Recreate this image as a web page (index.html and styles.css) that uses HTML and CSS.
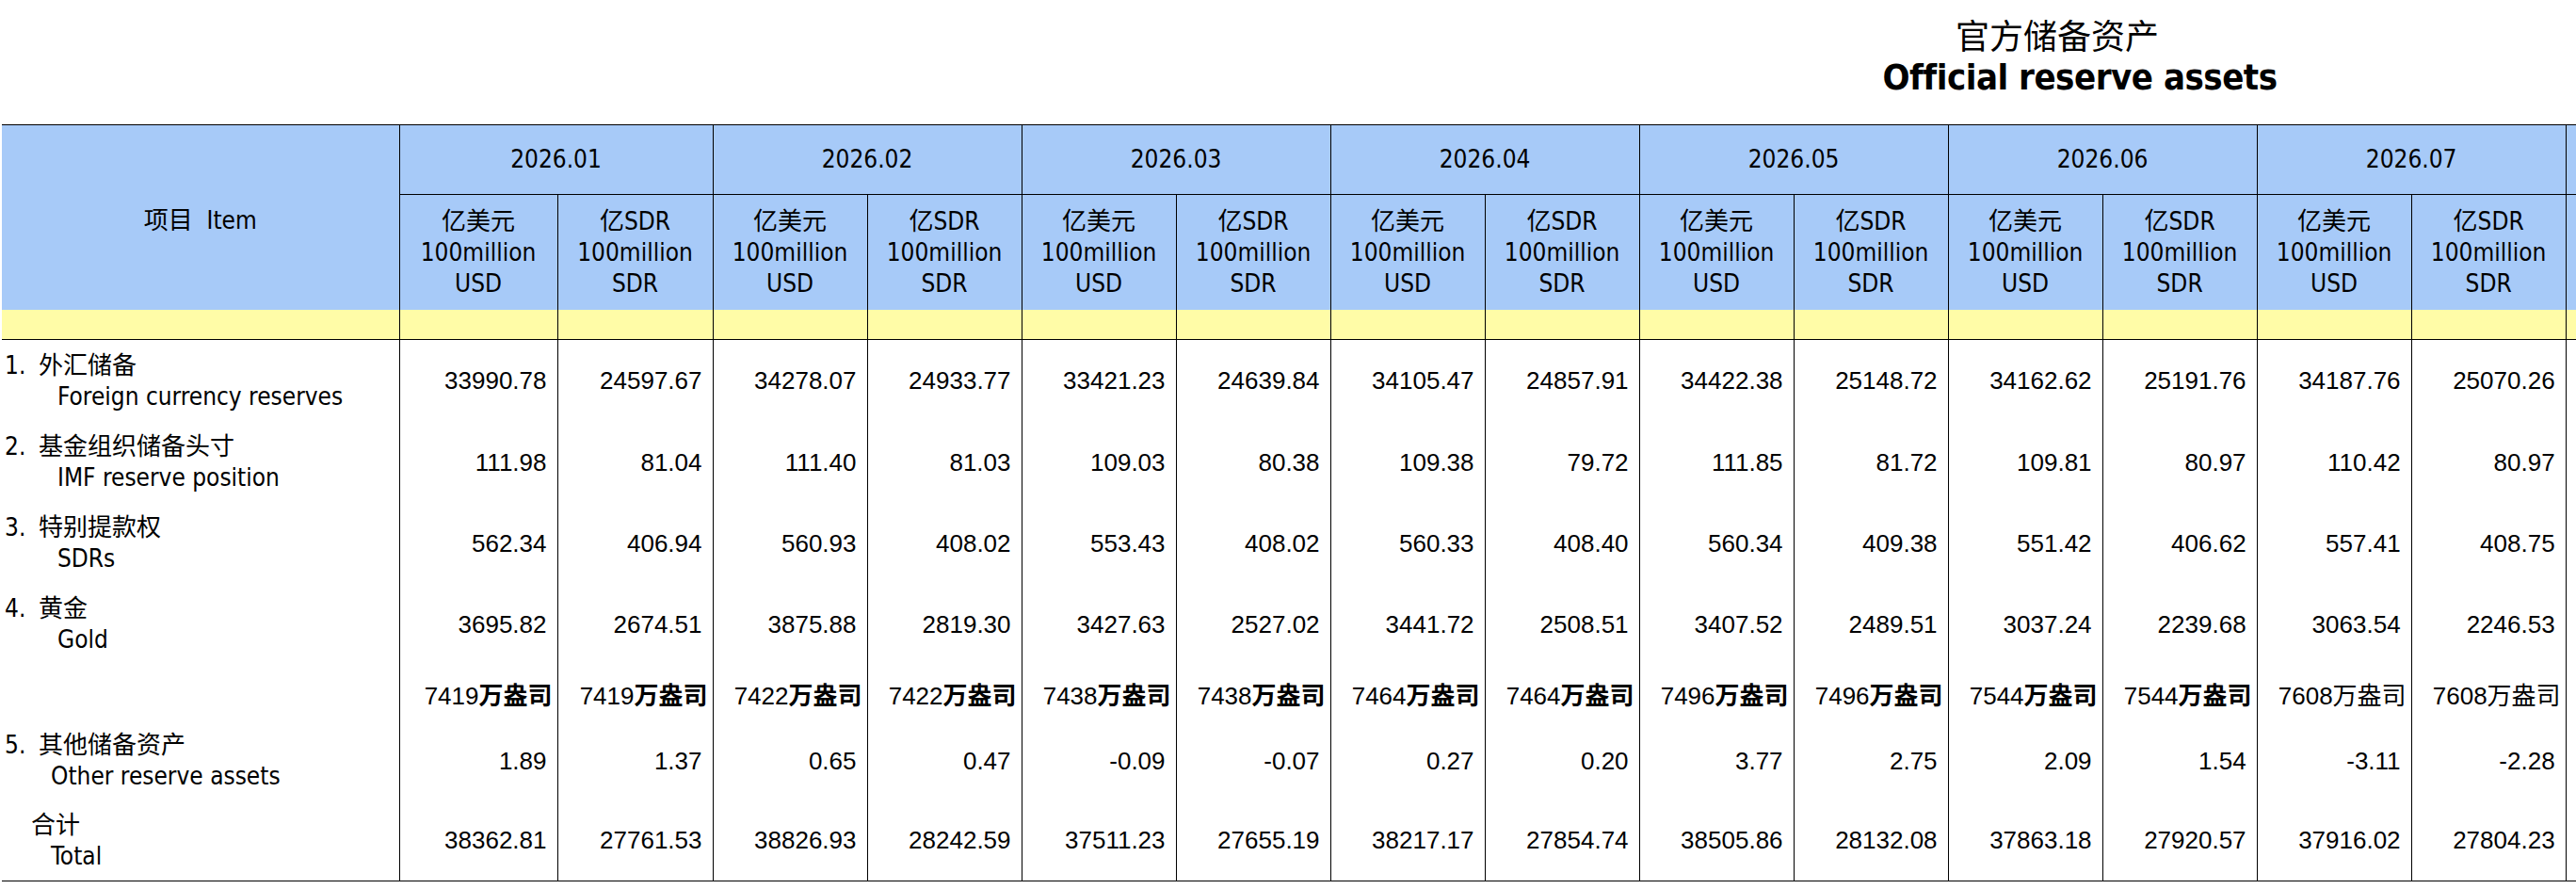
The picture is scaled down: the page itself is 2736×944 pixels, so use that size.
FILE: index.html
```html
<!DOCTYPE html>
<html lang="zh-CN">
<head>
<meta charset="utf-8">
<title>官方储备资产 Official reserve assets</title>
<link rel="stylesheet" href="styles.css">
</head>
<body>
<div class="page">
  <div class="title">
    <div class="title-cn">官方储备资产</div>
    <div class="title-en">Official reserve assets</div>
  </div>
  <table class="grid">
    <colgroup>
      <col class="c-item">
      <col class="c-usd1"><col class="c-sdr1">
      <col class="c-v"><col class="c-v">
      <col class="c-v"><col class="c-v">
      <col class="c-v"><col class="c-v">
      <col class="c-v"><col class="c-v">
      <col class="c-v"><col class="c-v">
      <col class="c-v"><col class="c-v">
      <col class="c-stub">
    </colgroup>
    <thead>
      <tr class="r-year">
        <th class="h-item" rowspan="2">项目&nbsp;&nbsp;Item</th>
        <th class="h-year" colspan="2">2026.01</th>
        <th class="h-year" colspan="2">2026.02</th>
        <th class="h-year" colspan="2">2026.03</th>
        <th class="h-year" colspan="2">2026.04</th>
        <th class="h-year" colspan="2">2026.05</th>
        <th class="h-year" colspan="2">2026.06</th>
        <th class="h-year" colspan="2">2026.07</th>
        <th class="h-year"></th>
      </tr>
      <tr class="r-unit">
        <th class="h-unit">亿美元<br>100million<br>USD</th>
        <th class="h-unit">亿SDR<br>100million<br>SDR</th>
        <th class="h-unit">亿美元<br>100million<br>USD</th>
        <th class="h-unit">亿SDR<br>100million<br>SDR</th>
        <th class="h-unit">亿美元<br>100million<br>USD</th>
        <th class="h-unit">亿SDR<br>100million<br>SDR</th>
        <th class="h-unit">亿美元<br>100million<br>USD</th>
        <th class="h-unit">亿SDR<br>100million<br>SDR</th>
        <th class="h-unit">亿美元<br>100million<br>USD</th>
        <th class="h-unit">亿SDR<br>100million<br>SDR</th>
        <th class="h-unit">亿美元<br>100million<br>USD</th>
        <th class="h-unit">亿SDR<br>100million<br>SDR</th>
        <th class="h-unit">亿美元<br>100million<br>USD</th>
        <th class="h-unit">亿SDR<br>100million<br>SDR</th>
        <th class="h-unit"></th>
      </tr>
      <tr class="r-band">
        <td></td><td></td><td></td><td></td><td></td><td></td><td></td><td></td>
        <td></td><td></td><td></td><td></td><td></td><td></td><td></td><td></td>
      </tr>
    </thead>
    <tbody>
      <tr class="r-d1">
        <td class="lab"><div class="ln"><span class="no">1.</span>外汇储备</div><div class="ln in-a">Foreign currency reserves</div></td>
        <td class="v">33990.78</td><td class="v">24597.67</td>
        <td class="v">34278.07</td><td class="v">24933.77</td>
        <td class="v">33421.23</td><td class="v">24639.84</td>
        <td class="v">34105.47</td><td class="v">24857.91</td>
        <td class="v">34422.38</td><td class="v">25148.72</td>
        <td class="v">34162.62</td><td class="v">25191.76</td>
        <td class="v">34187.76</td><td class="v">25070.26</td>
        <td></td>
      </tr>
      <tr class="r-d2">
        <td class="lab"><div class="ln"><span class="no">2.</span>基金组织储备头寸</div><div class="ln in-a">IMF reserve position</div></td>
        <td class="v">111.98</td><td class="v">81.04</td>
        <td class="v">111.40</td><td class="v">81.03</td>
        <td class="v">109.03</td><td class="v">80.38</td>
        <td class="v">109.38</td><td class="v">79.72</td>
        <td class="v">111.85</td><td class="v">81.72</td>
        <td class="v">109.81</td><td class="v">80.97</td>
        <td class="v">110.42</td><td class="v">80.97</td>
        <td></td>
      </tr>
      <tr class="r-d3">
        <td class="lab"><div class="ln"><span class="no">3.</span>特别提款权</div><div class="ln in-a">SDRs</div></td>
        <td class="v">562.34</td><td class="v">406.94</td>
        <td class="v">560.93</td><td class="v">408.02</td>
        <td class="v">553.43</td><td class="v">408.02</td>
        <td class="v">560.33</td><td class="v">408.40</td>
        <td class="v">560.34</td><td class="v">409.38</td>
        <td class="v">551.42</td><td class="v">406.62</td>
        <td class="v">557.41</td><td class="v">408.75</td>
        <td></td>
      </tr>
      <tr class="r-d4">
        <td class="lab"><div class="ln"><span class="no">4.</span>黄金</div><div class="ln in-a">Gold</div></td>
        <td class="v">3695.82</td><td class="v">2674.51</td>
        <td class="v">3875.88</td><td class="v">2819.30</td>
        <td class="v">3427.63</td><td class="v">2527.02</td>
        <td class="v">3441.72</td><td class="v">2508.51</td>
        <td class="v">3407.52</td><td class="v">2489.51</td>
        <td class="v">3037.24</td><td class="v">2239.68</td>
        <td class="v">3063.54</td><td class="v">2246.53</td>
        <td></td>
      </tr>
      <tr class="r-oz">
        <td class="lab"></td>
        <td class="v oz">7419<span class="u-b">万盎司</span></td><td class="v oz">7419<span class="u-b">万盎司</span></td>
        <td class="v oz">7422<span class="u-b">万盎司</span></td><td class="v oz">7422<span class="u-b">万盎司</span></td>
        <td class="v oz">7438<span class="u-b">万盎司</span></td><td class="v oz">7438<span class="u-b">万盎司</span></td>
        <td class="v oz">7464<span class="u-b">万盎司</span></td><td class="v oz">7464<span class="u-b">万盎司</span></td>
        <td class="v oz">7496<span class="u-b">万盎司</span></td><td class="v oz">7496<span class="u-b">万盎司</span></td>
        <td class="v oz">7544<span class="u-b">万盎司</span></td><td class="v oz">7544<span class="u-b">万盎司</span></td>
        <td class="v oz">7608万盎司</td><td class="v oz">7608万盎司</td>
        <td></td>
      </tr>
      <tr class="r-d5">
        <td class="lab"><div class="ln"><span class="no">5.</span>其他储备资产</div><div class="ln in-b">Other reserve assets</div></td>
        <td class="v">1.89</td><td class="v">1.37</td>
        <td class="v">0.65</td><td class="v">0.47</td>
        <td class="v">-0.09</td><td class="v">-0.07</td>
        <td class="v">0.27</td><td class="v">0.20</td>
        <td class="v">3.77</td><td class="v">2.75</td>
        <td class="v">2.09</td><td class="v">1.54</td>
        <td class="v">-3.11</td><td class="v">-2.28</td>
        <td></td>
      </tr>
      <tr class="r-tot">
        <td class="lab"><div class="ln in-c">合计</div><div class="ln in-b">Total</div></td>
        <td class="v">38362.81</td><td class="v">27761.53</td>
        <td class="v">38826.93</td><td class="v">28242.59</td>
        <td class="v">37511.23</td><td class="v">27655.19</td>
        <td class="v">38217.17</td><td class="v">27854.74</td>
        <td class="v">38505.86</td><td class="v">28132.08</td>
        <td class="v">37863.18</td><td class="v">27920.57</td>
        <td class="v">37916.02</td><td class="v">27804.23</td>
        <td></td>
      </tr>
    </tbody>
  </table>
</div>
</body>
</html>
```

FILE: styles.css
```css
html, body {
  margin: 0;
  padding: 0;
  background: #ffffff;
  overflow: hidden;
}

.page {
  width: 2736px;
  height: 944px;
  overflow: hidden;
  color: #000000;
  font-family: "DejaVu Sans Condensed", "DejaVu Sans", "Noto Sans CJK SC", sans-serif;
}

.title {
  height: 132px;
  width: 800px;
  margin-left: 1809px;
  box-sizing: border-box;
  padding-top: 14px;
  text-align: center;
}

.title-cn {
  font-family: "Noto Sans CJK SC", sans-serif;
  font-size: 36px;
  line-height: 44px;
  padding-right: 48px;
}

.title-en {
  font-weight: bold;
  font-size: 38px;
  line-height: 48px;
  letter-spacing: -0.5px;
}

.grid {
  border-collapse: collapse;
  table-layout: fixed;
  width: 2763px;
  margin-left: 2px;
  font-size: 26px;
}

.c-item { width: 422px; }
.c-usd1 { width: 168px; }
.c-sdr1 { width: 165px; }
.c-v { width: 164px; }
.c-stub { width: 40px; }

.grid th,
.grid td {
  padding: 0;
  border-left: 1px solid #000000;
  border-right: 1px solid #000000;
  vertical-align: middle;
  overflow: hidden;
  white-space: nowrap;
}

.grid th:first-child,
.grid td:first-child {
  border-left: none;
}

.grid th {
  background: #a7caf8;
  font-weight: normal;
  text-align: center;
}

.r-year th {
  border-top: 1px solid #000000;
  border-bottom: 1px solid #000000;
  height: 73px;
  line-height: 33px;
}

.r-year th.h-item {
  border-bottom: none;
  padding-top: 6px;
}

.r-unit th {
  height: 122px;
  line-height: 33px;
}

.h-item {
  line-height: 33px;
}

.r-band td {
  background: #fffca7;
  height: 31px;
  border-bottom: 1px solid #000000;
}

.lab {
  padding-left: 3px !important;
  text-align: left;
  line-height: 33px;
}

.ln {
  white-space: nowrap;
}

.no {
  display: inline-block;
  width: 36px;
}

.in-a { padding-left: 56px; }
.in-b { padding-left: 49px; }
.in-c { padding-left: 28px; }

.v {
  font-family: "Liberation Sans", "Noto Sans CJK SC", sans-serif;
  text-align: right;
  padding-right: 11px !important;
}

.v.oz {
  padding-right: 5px !important;
}

.u-b {
  font-weight: 600;
}

.r-d1 td { height: 87px; }
.r-d2 td { height: 86px; }
.r-d3 td { height: 86px; }
.r-d4 td { height: 86px; }
.r-oz td { height: 60px; }
.r-d5 td { height: 84px; }
.r-tot td {
  height: 85px;
  border-bottom: 1px solid #000000;
}
```
